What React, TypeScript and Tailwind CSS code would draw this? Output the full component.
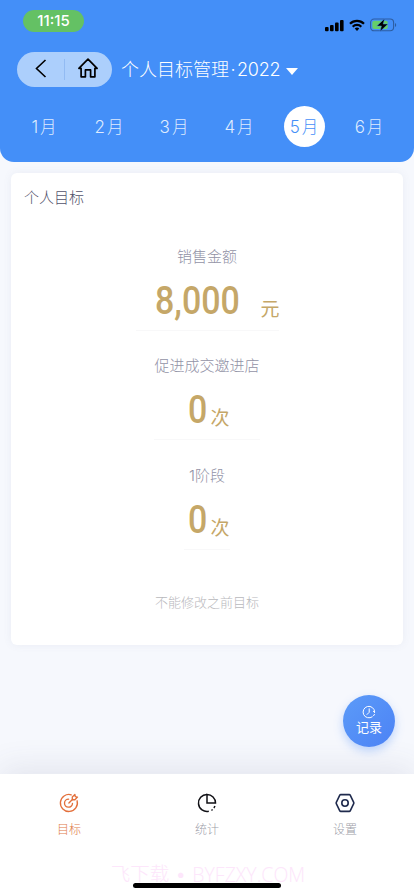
import { clsx } from 'clsx';

const months = ['1', '2', '3', '4', '5', '6'];

const goals = [
  { label: '销售金额', value: '8,000', unit: '元', width: 'w-[143px]', gap: 'gap-[21px] pl-[19px]' },
  { label: '促进成交邀进店', value: '0', unit: '次', width: 'w-[106px]', gap: 'gap-[3px] justify-center pl-1' },
  { label: '1阶段', value: '0', unit: '次', width: 'w-[46px]', gap: 'gap-[3px] justify-center pl-1' },
];

const tabs = [
  { label: '目标', icon: TargetIcon, color: 'text-[#e3703c]', text: 'text-[#e07a4a]' },
  { label: '统计', icon: PieIcon, color: 'text-[#111116]', text: 'text-[#9d9ea9]' },
  { label: '设置', icon: SettingsIcon, color: 'text-[#1f2a4d]', text: 'text-[#9d9ea9]' },
];

export default function App() {
  return (
    <div className="relative flex h-[896px] w-[414px] flex-col overflow-hidden bg-[#f6f8fd] font-[Inter,'Noto_Sans_CJK_SC',sans-serif]">
      <header className="h-[162px] shrink-0 rounded-b-[14px] bg-[#448ff8]">
        <StatusBar />
        <NavBar />
        <div className="mt-[19px] grid grid-cols-6 pr-3 pl-3">
          {months.map((m) => (
            <div key={m} className="flex justify-center">
              <button
                className={clsx(
                  'flex size-[41px] items-center justify-center gap-[2px] rounded-full pt-[2px] pr-px text-[17px] leading-none font-light whitespace-nowrap',
                  m === '5' ? 'bg-white text-[#448ff8]' : 'text-[#dfebfe]'
                )}
              >
                <span>{m}</span>
                <span className="text-[16.5px]">月</span>
              </button>
            </div>
          ))}
        </div>
      </header>

      <main className="mx-[11px] mt-[11px] h-[472px] shrink-0 rounded-md bg-white shadow-[0_0_8px_rgba(90,100,140,0.08)]">
        <h2 className="h-[72.5px] px-[13px] pt-[14.5px] text-[15px] leading-5 font-light text-[#51516b]">个人目标</h2>
        {goals.map((goal) => (
          <Goal key={goal.label} {...goal} />
        ))}
        <p className="mt-[18px] text-center text-[13px] leading-5 font-light text-[#b8b8bc]">不能修改之前目标</p>
      </main>

      <button className="absolute top-[695px] left-[343px] flex size-[52px] flex-col items-center rounded-full bg-linear-to-br from-[#5c9bf8] to-[#4c82f5] pt-[10px] text-white shadow-[0_4px_10px_rgba(76,140,248,0.35)]">
        <RecordIcon />
        <span className="-mt-px text-[13px] leading-[18px] font-normal">记录</span>
      </button>

      <footer className="mt-auto h-[122px] shrink-0 bg-white shadow-[0_-6px_30px_rgba(70,75,110,0.11)]">
        <nav className="grid h-[86px] grid-cols-3 pt-[18px]">
          {tabs.map(({ label, icon: Icon, color, text }) => (
            <a key={label} className="flex flex-col items-center">
              <span className={color}><Icon /></span>
              <span className={clsx('mt-[7px] text-[12px] leading-[18px] font-light', text)}>{label}</span>
            </a>
          ))}
        </nav>
        <p className="flex h-[30px] items-center justify-center pl-[2px] text-[19.5px] leading-none font-light whitespace-nowrap text-[#fde6fb]">
          飞下载<span className="mx-[6px]">•</span><span className="font-['Open_Sans']">BYFZXY.COM</span>
        </p>
      </footer>
      <div className="absolute top-[883px] left-[133px] h-[5px] w-[148px] rounded-full bg-black" />
    </div>
  );
}

function Goal({ label, value, unit, width, gap }: { label: string; value: string; unit: string; width: string; gap: string }) {
  return (
    <section className="flex h-[109.5px] flex-col items-center">
      <h3 className="text-[15px] leading-[22px] font-light text-[#9292a6]">{label}</h3>
      <div className={clsx('flex h-[63px] items-end border-b border-[#f8f8f9] pb-[7px] whitespace-nowrap text-[#c5a768]', width, gap)}>
        <Digits value={value} />
        <span className="pb-[4px] text-[19px] leading-none font-normal">{unit}</span>
      </div>
    </section>
  );
}

// narrow figures: Roboto squeezed inside a box of the final width
function Digits({ value }: { value: string }) {
  return (
    <span className={clsx("flex font-[Roboto] text-[39.5px] leading-[44px] font-medium", value.length > 1 ? 'w-[85px]' : 'w-[19px]')}>
      <span className="origin-left scale-x-[0.86]">{value}</span>
    </span>
  );
}

function StatusBar() {
  return (
    <div className="flex h-[52px] items-start justify-between pt-[10px] pr-[17px] pl-[23px]">
      <div className="flex h-[22px] w-[61px] items-center justify-center rounded-full bg-[#64c164] pt-px text-[15px] font-medium text-white">11:15</div>
      <div className="flex items-center gap-[5px] pt-[8px]">
        <svg width="19" height="13" viewBox="0 0 19 13">
          <rect x="0" y="8" width="3.6" height="4.2" rx="1" />
          <rect x="5" y="6" width="3.6" height="6.2" rx="1" />
          <rect x="10" y="3.5" width="3.6" height="8.7" rx="1" />
          <rect x="15" y="1" width="3.6" height="11.2" rx="1" />
        </svg>
        <svg width="16" height="13" viewBox="0 0 16 13" fill="none" stroke="#000" strokeWidth="2.2">
          <path d="M1 4.8a10 10 0 0 1 14 0" />
          <path d="M3.7 7.7a6 6 0 0 1 8.6 0" />
          <path d="m5.7 9.6 2.3 2.4 2.3-2.4a3.4 3.4 0 0 0-4.6 0Z" fill="#000" stroke="none" />
        </svg>
        <svg width="27" height="14" viewBox="0 0 27 14">
          <rect x=".6" y="1" width="23" height="11.8" rx="3.5" fill="none" stroke="#2d5da1" strokeWidth="1.1" />
          <rect x="2.3" y="2.7" width="15.5" height="8.4" rx="2" fill="#66cf68" />
          <path d="M25 5v4c1.6-.6 1.6-3.4 0-4Z" fill="#2d5da1" />
          <path d="M14.7.5 6.8 8h4.6l-1.4 5.5L18 6h-4.8Z" fill="#000" stroke="#448ff8" strokeWidth=".5" />
        </svg>
      </div>
    </div>
  );
}

function NavBar() {
  return (
    <div className="flex h-[35px] items-center pl-[17px]">
      <div className="flex h-[35px] w-[95px] shrink-0 items-center rounded-full bg-[#accffc]">
        <div className="flex w-[47px] justify-center pb-[3px]">
          <svg width="12" height="19" viewBox="0 0 12 19" fill="none" stroke="#000" strokeWidth="1.6"><path d="m10.5 1-9 8.5 9 8.5" /></svg>
        </div>
        <div className="h-[21px] w-px bg-[#92bbf3]" />
        <div className="flex flex-1 justify-center pr-[2px] pb-[3px]">
          <svg width="20" height="20" viewBox="0 0 20 20" fill="none" stroke="#000" strokeWidth="1.7" strokeLinejoin="round" strokeLinecap="round">
            <path d="M.9 10.3 10 1.2l9.1 9.1h-2.2v8.5h-4.3v-6.9H7.4v6.9H3.1v-8.5Z" />
          </svg>
        </div>
      </div>
      <h1 className="ml-[9px] flex items-center text-[18px] leading-none font-light whitespace-nowrap text-white">
        <span>个人目标管理</span>
        <span className="w-[8px] text-center">·</span>
        <span className="tracking-[-0.2px]">2022</span>
      </h1>
      <svg className="mt-[3px] ml-[6px]" width="12" height="7" viewBox="0 0 12 7" fill="#fff"><path d="M0 0h12L6 7Z" /></svg>
    </div>
  );
}

function RecordIcon() {
  return (
    <svg width="14" height="14" viewBox="0 0 14 14" fill="none" stroke="currentColor" strokeWidth="1" strokeLinecap="round">
      <path d="M10.2 11.9a5.8 5.8 0 1 1 2.5-5.2" />
      <path d="M12.4 9.4a5.8 5.8 0 0 1-.8 1.3" />
      <path d="m11.4 6.4 1.3 1.2" />
      <path d="M7.2 3.8v3.5L5 9.5" />
    </svg>
  );
}

function TargetIcon() {
  return (
    <svg width="22" height="22" viewBox="0 0 22 22" fill="none" stroke="currentColor" strokeWidth="1.35" strokeLinecap="round" strokeLinejoin="round">
      <path d="M13.2 2.8a8.5 8.5 0 1 0 5.9 6" />
      <path d="M10.6 7.2a4 4 0 1 0 3.9 4.2" />
      <path d="m10.9 11.1 3.8-3.8" />
      <path d="M14.3 7.7V5.1l2.6-2.6.4 2.2 2.2.4-2.6 2.6Z" />
    </svg>
  );
}

function PieIcon() {
  return (
    <svg width="22" height="22" viewBox="0 0 22 22" fill="none" stroke="currentColor" strokeWidth="1.5">
      <path d="M11 2.5a8.5 8.5 0 1 0 1.8 16.8" />
      <path d="M11 2.5v8.6h8.5A8.5 8.5 0 0 0 11 2.5Z" />
      <path d="M18.9 14a8.5 8.5 0 0 1-1 2M16.6 17.5a8.5 8.5 0 0 1-1.2.8" />
    </svg>
  );
}

function SettingsIcon() {
  return (
    <svg width="22" height="22" viewBox="0 0 22 22" fill="none" stroke="currentColor" strokeWidth="1.6" strokeLinejoin="round">
      <path d="M6.8 2.6h8.4q.7 0 1 .6l3.5 7.1q.3.7 0 1.4l-3.5 7.1q-.3.6-1 .6H6.8q-.7 0-1-.6l-3.5-7.1q-.3-.7 0-1.4l3.5-7.1q.3-.6 1-.6Z" />
      <circle cx="11" cy="11" r="3.2" />
    </svg>
  );
}
